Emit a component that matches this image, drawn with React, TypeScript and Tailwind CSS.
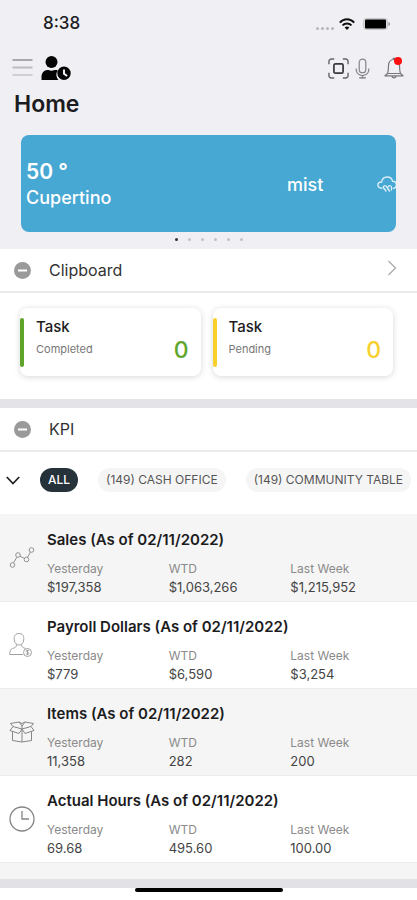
import { useState } from "react";

const filters = ["ALL", "(149) CASH OFFICE", "(149) COMMUNITY TABLE"];

const tasks = [
  { label: "Completed", count: 0, bar: "bg-[#5fa52c]", text: "text-[#5fa52c]" },
  { label: "Pending", count: 0, bar: "bg-[#f8d02c]", text: "text-[#f8d02c]" },
];

const UserClockIcon = () => (
  <svg width="30" height="24" viewBox="0 0 30 24" fill="#050505">
    <circle cx="10.5" cy="6" r="6" />
    <path d="M0.5 24v-3c0-4 2.5-7 6-7h1c1.8 1 4.2 1 6 0h1c.8 0 1.5.1 2.2.4A7.5 7.5 0 0 0 17.5 24z" />
    <path
      fillRule="evenodd"
      d="M23 10.5a6.7 6.7 0 1 1 0 13.4a6.7 6.7 0 0 1 0-13.4zM22 13.5v4.7l3.5 2.6 1.2-1.5-2.7-2v-3.8z"
    />
  </svg>
);

const WifiIcon = () => (
  <svg width="16" height="12" viewBox="0 0 16 12" fill="none" stroke="#111" strokeWidth="2">
    <path d="M0.8 4.6C5 .2 11 .2 15.2 4.6" />
    <path d="M3.5 7.4C6 4.9 10 4.9 12.5 7.4" />
    <path d="M8 12L5.6 9.5C7 8.3 9 8.3 10.4 9.5Z" fill="#111" stroke="none" />
  </svg>
);

const BatteryIcon = () => (
  <svg width="28" height="12" viewBox="0 0 28 12">
    <rect x="0.5" y="0.5" width="24" height="11" rx="3" fill="#dcdcdf" stroke="#c6c6ca" />
    <rect x="2" y="1.5" width="21" height="9" rx="1" fill="#000" />
    <path d="M25.5 4c2 .7 2 3.3 0 4z" fill="#8a8a8e" />
  </svg>
);

const ScanIcon = () => (
  <svg width="21" height="21" viewBox="0 0 22 22" fill="none" stroke="#66666a" strokeWidth="1.5">
    <path d="M1 6.5V3.500A2.5 2.5 0 0 1 3.5 1H6.5M15.5 1h3A2.5 2.5 0 0 1 21 3.5V6.5M21 15.5v3a2.5 2.5 0 0 1-2.5 2.5H15.5M6.5 21H3.5A2.5 2.5 0 0 1 1 18.5V15.5" />
    <rect x="6.2" y="6.2" width="9.600" height="9.600" rx="1.5" stroke="#3a3a3c" strokeWidth="1.8" />
  </svg>
);

const MicIcon = () => (
  <svg width="15" height="21" viewBox="0 0 16 22" fill="none" stroke="#85858a" strokeWidth="1.3">
    <rect x="4.5" y="1" width="7" height="14.5" rx="3.5" />
    <path d="M1.3 11v1.5a6.7 6 0 0 0 13.4 0V11M8 18.5V21" />
    <path d="M4.5 21h7" strokeWidth="1.6" />
  </svg>
);

const BellIcon = () => (
  <svg width="20" height="22" viewBox="0 0 20 22" fill="none" stroke="#77777b" strokeWidth="1.2" strokeLinejoin="round">
    <path d="M3.5 16.5c1-2 .8-4.500 1-8C4.7 5 6.5 2.5 10 2.5s5.3 2.5 5.5 6c.2 3.5 0 6 1 8" />
    <path d="M3.5 16.5L1 18.8h18l-2.5-2.3zM8 19.5c.5 1.8 3.5 1.8 4 0M9 2.3c0-1.5 2-1.5 2 0" />
  </svg>
);

const RainIcon = () => (
  <svg width="20" height="17" viewBox="0 0 20 17" fill="none" stroke="#d9eef7" strokeWidth="1.4" strokeLinecap="round">
    <path d="M4.8 12.3C-.5 12-.2 6 4.6 6C5.5-.5 14.5-.5 15.5 5.2c4.8-.2 5.2 6.500 1 7.200" />
    <path d="M6.2 11c.8-1.800 2.600-1.800 3.600 0M11 11c.8-1.800 2.600-1.800 3.600 0M6.300 11.500l2.700 3.500M10 11.500l2.500 3.500M14.500 11.500v2.500" />
  </svg>
);

const ChartIcon = () => (
  <svg width="26" height="22" viewBox="0 0 26 22" fill="none" stroke="#929292" strokeWidth="1">
    <circle cx="3.5" cy="18" r="2.3" />
    <circle cx="9" cy="8" r="2.3" />
    <circle cx="17.5" cy="12.5" r="2.3" />
    <circle cx="22.5" cy="3" r="2.3" />
    <path d="M4.500 15.800L7.900 10.200M11 9.200l4.500 2.300M18.500 10.400l2.900-5.300" />
  </svg>
);

const PayrollIcon = () => (
  <svg width="26" height="26" viewBox="0 0 26 26" fill="none" stroke="#a2a2a2" strokeWidth="1">
    <path d="M10 1.5c5.5 0 5 5 4.5 7.5S12 13 10 13s-4-1.500-4.500-4S4.500 1.500 10 1.500z" />
    <path d="M7.5 12.5c0 3-1.500 3-4 4C1.2 17.500.8 19.500.8 22.500H14M12.500 12.500c0 3 1.500 3 4 4" />
    <circle cx="18.5" cy="20.5" r="4" />
    <path d="M20 18.8c-1-1-3-.5-2.8.6.2 1 2.7.8 2.7 2 0 1.1-2 1.3-3 .3M18.500 17.800v5.400" />
  </svg>
);

const BoxIcon = () => (
  <svg width="26" height="22" viewBox="0 0 26 22" fill="none" stroke="#858585" strokeWidth="1" strokeLinejoin="round">
    <path d="M13 8L4 5.5 1 9.5l9 3zM13 8l9-2.500 3 4-9 3zM13 8v13" />
    <path d="M13 5L10 1 1.500 2.500 4 5.500M13 5l3-4 8.500 1.500L22 5.500M13 5v3M10 1l3 1.500L16 1" />
    <path d="M3.5 11v8.500L13 21l9.500-1.500V11" />
  </svg>
);

const ClockIcon = () => (
  <svg width="26" height="26" viewBox="0 0 26 26" fill="none" stroke="#858585" strokeWidth="1.3">
    <circle cx="13" cy="13" r="12" />
    <path d="M13 5v8h7" />
  </svg>
);

const kpis = [
  { name: "Sales", values: ["$197,358", "$1,063,266", "$1,215,952"], icon: <ChartIcon /> },
  { name: "Payroll Dollars", values: ["$779", "$6,590", "$3,254"], icon: <PayrollIcon /> },
  { name: "Items", values: ["11,358", "282", "200"], icon: <BoxIcon /> },
  { name: "Actual Hours", values: ["69.68", "495.60", "100.00"], icon: <ClockIcon /> },
];

const periods = ["Yesterday", "WTD", "Last Week"];

function SectionHeader({ title, chevron }: { title: string; chevron?: boolean }) {
  return (
    <div className="flex h-11 items-center border-b-2 border-[#ebebec] bg-white pr-5 pl-3">
      <button className="flex size-5 items-center justify-center" aria-label={`Collapse ${title}`}>
        <svg width="17" height="17" viewBox="0 0 17 17">
          <circle cx="8.5" cy="8.5" r="8.5" fill="#9a9a9a" />
          <path d="M4 8.500h9" stroke="#fff" strokeWidth="2" />
        </svg>
      </button>
      <h2 className="ml-[17px] flex-1 text-base text-[#333]">{title}</h2>
      {chevron && (
        <button className="pb-1" aria-label={`Open ${title}`}>
          <svg width="10" height="16" viewBox="0 0 10 16" fill="none" stroke="#aaaaad" strokeWidth="1.3">
            <path d="M1.500 1l7 7-7 7" />
          </svg>
        </button>
      )}
    </div>
  );
}

export default function App() {
  const [active, setActive] = useState("ALL");

  return (
    <div className="min-h-screen overflow-x-hidden bg-white font-['Inter',sans-serif] text-[#1c1c1e]">
      <header className="bg-[#efeff4] pb-1">
        {/* Status bar */}
        <div className="flex h-12 items-center justify-between pr-[26px] pl-[43px]">
          <span className="text-[17px] font-medium">8:38</span>
          <div className="flex items-center gap-1">
            <svg width="20" height="12" viewBox="0 0 20 12" fill="#b7b7bb">
              <circle cx="2.5" cy="10.5" r="1.5" />
              <circle cx="7.5" cy="10.5" r="1.5" />
              <circle cx="12.5" cy="10.5" r="1.5" />
              <circle cx="17.5" cy="10.5" r="1.5" />
            </svg>
            <WifiIcon />
            <span className="ml-1">
              <BatteryIcon />
            </span>
          </div>
        </div>

        {/* Toolbar */}
        <div className="flex h-10 items-center pr-[13px] pl-3">
          <button aria-label="Menu">
            <svg width="21" height="20" viewBox="0 0 21 20" strokeWidth="2">
              <path d="M0.5 2h20" stroke="#a9a9ad" />
              <path d="M0.5 9.5h20" stroke="#bcbcc0" />
              <path d="M0.5 17h20" stroke="#cfcfd3" />
            </svg>
          </button>
          <button className="ml-2" aria-label="User clock">
            <UserClockIcon />
          </button>
          <div className="ml-auto flex items-center">
            <button aria-label="Scan">
              <ScanIcon />
            </button>
            <button className="ml-1.5" aria-label="Voice">
              <MicIcon />
            </button>
            <button className="relative ml-3.5" aria-label="Notifications">
              <BellIcon />
              <span className="absolute top-0 right-0.5 size-2 rounded-full bg-[#ff0f0f]" />
            </button>
          </div>
        </div>

        <h1 className="px-3.5 text-[23px] leading-8 font-semibold">Home</h1>

        {/* Weather */}
        <div className="mx-[21px] mt-[15px] flex h-[97px] items-center overflow-hidden rounded-lg bg-[#47a8d3] pt-0.5 pl-[5px] text-white">
          <div className="flex-1">
            <p className="text-[21px] leading-[26px] font-semibold">50 °</p>
            <p className="text-[18px] leading-[26px] font-medium">Cupertino</p>
          </div>
          <p className="w-[90px] text-[18px] font-medium">mist</p>
          <span className="-mr-px">
            <RainIcon />
          </span>
        </div>
        <div className="mt-1 flex h-[9px] justify-center gap-[10px] pt-0.5">
          {[0, 1, 2, 3, 4, 5].map((i) => (
            <span key={i} className={`size-[3px] rounded-full ${i === 0 ? "bg-[#333]" : "bg-[#c2c2c6]"}`} />
          ))}
        </div>
      </header>

      {/* Clipboard */}
      <section>
        <SectionHeader title="Clipboard" chevron />
        <div className="grid grid-cols-2 gap-3 pt-[15px] pr-6 pb-[23px] pl-5">
          {tasks.map((task) => (
            <div
              key={task.label}
              className="flex h-[68px] items-center rounded-lg pr-3 shadow-[0_1px_6px_rgba(0,0,0,0.16)]"
            >
              <span className={`h-[49px] w-1 rounded-sm ${task.bar}`} />
              <div className="ml-3 flex-1 self-start pt-2">
                <h3 className="text-[15px] leading-[22px] font-medium">Task</h3>
                <p className="text-[11px] leading-[22px] text-[#777]">{task.label}</p>
              </div>
              <span className={`mt-4 text-[23px] font-medium ${task.text}`}>{task.count}</span>
            </div>
          ))}
        </div>
        <div className="h-[9px] bg-[#e4e4e8]" />
      </section>

      {/* KPI */}
      <section>
        <SectionHeader title="KPI" />
        <div className="flex h-[62px] items-center overflow-hidden pb-1.5 pl-1.5 whitespace-nowrap">
          <button className="shrink-0" aria-label="Expand filters">
            <svg width="14" height="9" viewBox="0 0 14 9" fill="none" stroke="#222" strokeWidth="1.8">
              <path d="M0.8 1L7 7.500 13.200 1" />
            </svg>
          </button>
          <div className="ml-5 flex gap-5">
            {filters.map((filter) => (
              <button
                key={filter}
                onClick={() => setActive(filter)}
                className={`h-6 rounded-full px-2 text-[12px] ${
                  active === filter ? "bg-[#26323a] font-medium text-white" : "bg-[#f5f5f5] text-[#555]"
                }`}
              >
                {filter}
              </button>
            ))}
          </div>
        </div>

        <ul className="border-t border-[#f5f5f5]">
          {kpis.map((kpi) => (
            <li key={kpi.name} className="flex h-[87px] border-b border-[#ececec] odd:bg-[#f5f5f5]">
              <div className="flex w-[47px] shrink-0 items-center pl-[9px]">{kpi.icon}</div>
              <div className="flex-1 pt-[15px] pr-[5px]">
                <h3 className="text-[15px] leading-5 font-semibold">{kpi.name} (As of 02/11/2022)</h3>
                <dl className="mt-[10px] grid grid-cols-3 leading-[18px]">
                  {periods.map((period, i) => (
                    <div key={period}>
                      <dt className="text-[12px] leading-[18px] text-[#8a8a8a]">{period}</dt>
                      <dd className="text-[13px] leading-[18px] text-[#444]">{kpi.values[i]}</dd>
                    </div>
                  ))}
                </dl>
              </div>
            </li>
          ))}
        </ul>
        <div className="h-4 bg-[#f5f5f5]" />
        <div className="h-[9px] bg-[#e2e2e6]" />
      </section>

      <div className="mx-auto h-1 w-[148px] rounded-full bg-black" />
    </div>
  );
}
